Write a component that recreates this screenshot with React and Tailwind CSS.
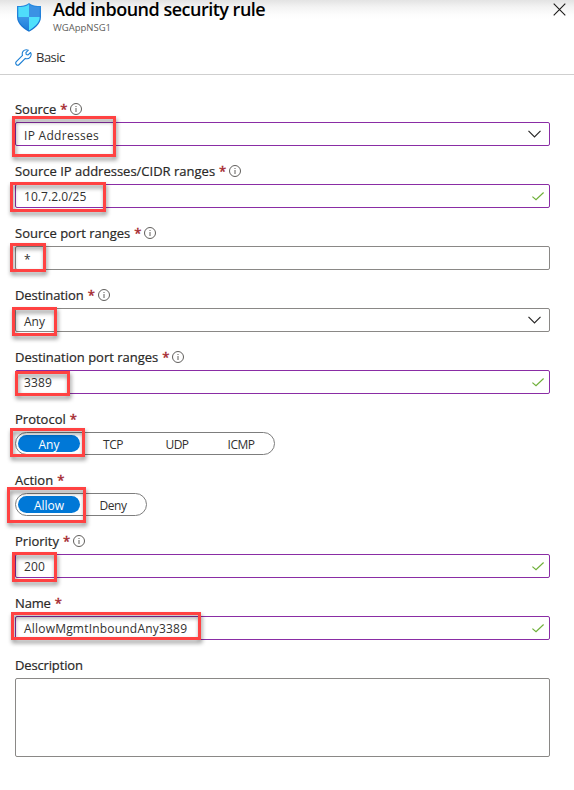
import React from "react";

function InfoIcon() {
  return (
    <svg className="ml-[4px] size-[12px] shrink-0" viewBox="0 0 12 12" fill="none">
      <circle cx="6" cy="6" r="5.5" stroke="#605e5c" strokeWidth="1" />
      <path d="M6 5v4M6 3v1" stroke="#605e5c" strokeWidth="1" />
    </svg>
  );
}

function Chevron() {
  return (
    <svg className="mr-[8px] h-[8px] w-[13px]" viewBox="0 0 13 8" fill="none">
      <path d="M0.5 0.8L6.5 6.8L12.5 0.8" stroke="#292827" strokeWidth="1.2" />
    </svg>
  );
}

function Check() {
  return (
    <svg className="mr-[5px] h-[9px] w-[12px]" viewBox="0 0 12 9" fill="none">
      <path d="M0.4 4.6L4 7.8L11.6 0.5" stroke="#6fb03a" strokeWidth="1.2" />
    </svg>
  );
}

function ShieldIcon() {
  return (
    <svg className="h-[29px] w-[24px]" viewBox="0 0 24 29">
      <defs>
        <clipPath id="shield">
          <path d="M12 1.2C14.4 3.4 18.6 4.1 22.7 4.1V14C22.7 20.7 16 25 12 27.4C8 25 1.3 20.7 1.3 14V4.1C5.4 4.1 9.6 3.4 12 1.2Z" />
        </clipPath>
        <linearGradient id="rim" x1="0" y1="0" x2="0" y2="1">
          <stop offset="0" stopColor="#2a8be0" />
          <stop offset="1" stopColor="#1570cf" />
        </linearGradient>
        <linearGradient id="deep" x1="0" y1="0" x2="0" y2="1">
          <stop offset="0" stopColor="#3c97e8" />
          <stop offset="1" stopColor="#1a7ad6" />
        </linearGradient>
      </defs>
      <path
        d="M12 0C14.6 2.5 19.5 3.1 24 3.1V14C24 21.5 16.5 26.2 12 28.8C7.5 26.2 0 21.5 0 14V3.1C4.500 3.1 9.400 2.5 12 0Z"
        fill="url(#rim)"
      />
      <g clipPath="url(#shield)">
        <path d="M0 0H12V14H0Z" fill="#4fdcfb" />
        <path d="M12 0H24V14H12Z" fill="#3b92e4" />
        <path d="M0 14H12V29H0Z" fill="url(#deep)" />
        <path d="M12 14H24V29H12Z" fill="#4fe0fc" />
      </g>
    </svg>
  );
}

function WrenchIcon() {
  return (
    <svg className="size-[17px]" viewBox="0 0 17 17" fill="none">
      <path
        d="M15.600 3.500L13.100 5.900L11.200 5.500L10.900 3.700L13.300 1.200C11.500 0.400 9.400 0.800 8.200 2.200C7.200 3.400 7 5 7.500 6.400L1.300 12.600C0.500 13.400 0.500 14.700 1.300 15.500C2.100 16.300 3.400 16.300 4.200 15.500L10.300 9.400C11.900 10 13.800 9.600 15 8.300C16.200 7 16.400 5.100 15.600 3.500Z"
        stroke="#1b7fd4"
        strokeWidth="1.1"
        strokeLinejoin="round"
      />
    </svg>
  );
}

function Highlight({ className }) {
  return (
    <div
      className={`pointer-events-none absolute border-[3px] border-[#ff4242] drop-shadow-[1px_3px_2px_rgba(0,0,0,0.45)] ${className}`}
    />
  );
}

function Label({ text, required = true, info, tracking = "" }) {
  return (
    <div className="flex h-[18px] items-center text-[13px] leading-[18px] text-[#292827] [-webkit-text-stroke:0.2px]">
      <span className={tracking}>{text}</span>
      {required && <span className="ml-[4px] w-[6px] text-[#a4262c] [-webkit-text-stroke:0.4px]">*</span>}
      {info && <InfoIcon />}
    </div>
  );
}

function Field({ label, info = true, tracking, value, valueClass = "pt-[2px]", border = "border-[#8a2da5]", icon, highlight }) {
  return (
    <div className="mb-[16px] flex flex-col gap-[4px]">
      <Label text={label} info={info} tracking={tracking} />
      <div className="relative">
        <div className={`flex h-[24px] items-center justify-between rounded-[2px] border bg-white pl-[8px] ${border}`}>
          <span className={`text-[12px] leading-[18px] text-[#323130] ${valueClass}`}>{value}</span>
          {icon}
        </div>
        <Highlight className={highlight} />
      </div>
    </div>
  );
}

function Segmented({ label, options, highlight, tracking }) {
  return (
    <div className="mb-[16px] flex flex-col gap-[4px]">
      <Label text={label} tracking={tracking} />
      <div className="relative flex">
        <div className="flex h-[23px] gap-[2px] rounded-full border border-[#7d7d7d] bg-white p-[2px]">
          {options.map((option, i) => (
            <div
              key={option}
              className={`flex w-[62px] items-center justify-center rounded-full pt-[2px] text-[12px] leading-[16px] ${
                i === 0 ? "bg-[#0078d7] text-white" : "tracking-[-0.5px] text-[#323130]"
              }`}
            >
              {option}
            </div>
          ))}
        </div>
        <Highlight className={highlight} />
      </div>
    </div>
  );
}

export default function App() {
  return (
    <div className="h-[790px] w-[574px] bg-white font-['Open_Sans','Noto_Sans',sans-serif]">
      <header className="flex h-[75px] flex-col border-b border-[#cfcfcf] bg-[linear-gradient(to_bottom,#e3e3e3_0px,#f3f3f3_7px,#fdfdfd_15px,#ffffff_20px)]">
        <div className="flex h-[40px] items-start pl-[17px] pr-[8px]">
          <div className="pt-[3px]">
            <ShieldIcon />
          </div>
          <div className="ml-[12px] flex flex-1 flex-col">
            <h1 className="h-[21px] whitespace-nowrap text-[18px] font-semibold leading-[19px] tracking-[-0.5px] text-black">
              Add inbound security rule
            </h1>
            <p className="text-[9.5px] leading-[14px] text-[#605e5c]">WGAppNSG1</p>
          </div>
          <svg className="mt-[3px] size-[13px]" viewBox="0 0 13 13" fill="none">
            <path d="M0.700 0.700L12.300 12.300M12.300 0.700L0.700 12.300" stroke="#1b1a19" strokeWidth="1.1" />
          </svg>
        </div>
        <div className="flex h-[34px] items-center gap-[4px] pl-[15px]">
          <WrenchIcon />
          <span className="text-[13px] leading-[18px] tracking-[-0.5px] text-[#323130]">Basic</span>
        </div>
      </header>

      <main className="flex flex-col pl-[15px] pr-[24px] pt-[25px]">
        <Field label="Source" tracking="tracking-[-0.100px]" value="IP Addresses" valueClass="pt-[4px] tracking-[0.300px]" icon={<Chevron />} highlight="left-[-3px] top-[-6px] h-[41px] w-[104px]" />
        <Field label="Source IP addresses/CIDR ranges" value="10.7.2.0/25" valueClass="pt-[2px] tracking-[0.050px]" icon={<Check />} highlight="left-[-5px] top-[-2px] h-[30px] w-[96px]" />
        <Field label="Source port ranges" value="*" valueClass="pt-[3px] text-[11px]" border="border-[#8a8886]" highlight="left-[-5px] top-[-3px] h-[29px] w-[36px]" />
        <Field label="Destination" tracking="tracking-[-0.100px]" value="Any" valueClass="pt-[4px]" border="border-[#8a8886]" icon={<Chevron />} highlight="left-[-3px] top-[-1px] h-[29px] w-[45px]" />
        <Field label="Destination port ranges" value="3389" valueClass="pt-[2px] tracking-[0.150px]" icon={<Check />} highlight="left-0 top-[1px] h-[25px] w-[55px]" />
        <Segmented label="Protocol" options={["Any", "TCP", "UDP", "ICMP"]} highlight="left-[-5px] top-[-4px] h-[29px] w-[75px]" />
        <Segmented label="Action" options={["Allow", "Deny"]} highlight="left-[-8px] top-[-6px] h-[36px] w-[79px]" />
        <Field label="Priority" value="200" valueClass="pt-[2px] tracking-[0.150px]" icon={<Check />} highlight="left-[-3px] top-[-2px] h-[30px] w-[45px]" />
        <Field label="Name" info={false} tracking="tracking-[-0.150px]" value="AllowMgmtInboundAny3389" valueClass="pt-[2px] tracking-[0.200px]" icon={<Check />} highlight="left-[-4px] top-[-4px] h-[28px] w-[190px]" />
        <div className="flex flex-col gap-[4px]">
          <Label text="Description" required={false} tracking="tracking-[-0.150px]" />
          <div className="h-[79px] rounded-[2px] border border-[#8a8886] bg-white" />
        </div>
      </main>
    </div>
  );
}
